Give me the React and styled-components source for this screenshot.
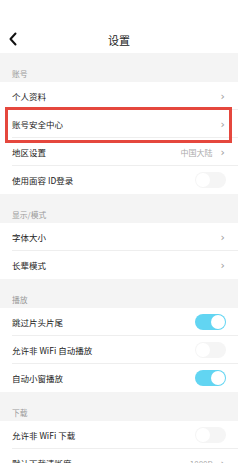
import React from "react";
import styled, { createGlobalStyle } from "styled-components";

const Global = createGlobalStyle`
  html, body {
    margin: 0;
    padding: 0;
    background: #f4f4f4;
    font-family: "Noto Sans CJK SC", "Noto Sans", sans-serif;
  }
`;

const sections = [
  {
    title: "账号",
    rows: [
      { label: "个人资料", type: "link" },
      { label: "账号安全中心", type: "link", marked: true },
      { label: "地区设置", type: "link", value: "中国大陆" },
      { label: "使用面容 ID登录", type: "toggle", on: false, last: true },
    ],
  },
  {
    title: "显示/模式",
    rows: [
      { label: "字体大小", type: "link" },
      { label: "长辈模式", type: "link", last: true },
    ],
  },
  {
    title: "播放",
    rows: [
      { label: "跳过片头片尾", type: "toggle", on: true },
      { label: "允许非 WiFi 自动播放", type: "toggle", on: false },
      { label: "自动小窗播放", type: "toggle", on: true, last: true },
    ],
  },
  {
    title: "下载",
    rows: [
      { label: "允许非 WiFi 下载", type: "toggle", on: false },
      { label: "默认下载清晰度", type: "link", value: "1080P" },
    ],
  },
];

const App = () => {
  return (
    <>
      <Global />
      <Page>
        <Header>
          <Back>
            <svg width="10" height="14" viewBox="0 0 10 14">
              <path
                d="M7.5 1.5 L2.5 7 L7.5 12.5"
                fill="none"
                stroke="#111"
                strokeWidth="2"
                strokeLinecap="round"
                strokeLinejoin="round"
              />
            </svg>
          </Back>
          <Title>设置</Title>
        </Header>
        {sections.map((section) => (
          <Section key={section.title}>
            <SectionTitle>{section.title}</SectionTitle>
            {section.rows.map((row) => (
              <Row key={row.label} last={row.last}>
                <Label>{row.label}</Label>
                <Right>
                  {row.value && <Value>{row.value}</Value>}
                  {row.type === "link" && <Chevron>›</Chevron>}
                  {row.type === "toggle" && (
                    <Toggle on={row.on}>
                      <Knob on={row.on} />
                    </Toggle>
                  )}
                </Right>
                {row.marked && <Highlight />}
              </Row>
            ))}
          </Section>
        ))}
      </Page>
    </>
  );
};

export default App;

// css
const Page = styled.div`
  width: 238px;
  min-height: 463px;
  background: #f4f4f4;
  overflow: hidden;
`;

const Header = styled.div`
  height: 53px;
  background: #fff;
  display: flex;
  align-items: center;
  justify-content: center;
  position: relative;
  padding-top: 26px;
  box-sizing: border-box;
`;

const Back = styled.div`
  position: absolute;
  left: 8px;
  top: 32px;
  width: 10px;
  height: 14px;
  display: flex;
`;

const Title = styled.div`
  font-size: 11px;
  color: #222;
  line-height: 22px;
`;

const Section = styled.div`
  display: flex;
  flex-direction: column;
`;

const SectionTitle = styled.div`
  height: 29px;
  box-sizing: border-box;
  padding: 0 12px 3px;
  display: flex;
  align-items: flex-end;
  font-size: 7.8px;
  color: #9a9a9a;
`;

const Row = styled.div`
  position: relative;
  height: 28px;
  background: #fff;
  display: flex;
  align-items: center;
  justify-content: space-between;
  padding: 0 12px;
  box-sizing: border-box;
  &::after {
    content: "";
    display: ${(p) => (p.last ? "none" : "block")};
    position: absolute;
    left: 12px;
    right: 0;
    bottom: 0;
    height: 1px;
    background: #eeeeee;
  }
`;

const Label = styled.div`
  font-size: 8.5px;
  color: #222;
`;

const Right = styled.div`
  display: flex;
  align-items: center;
  gap: 8px;
`;

const Value = styled.span`
  font-size: 8px;
  color: #aaa;
`;

const Chevron = styled.span`
  font-size: 11px;
  color: #999;
  line-height: 1;
  margin-right: 1px;
  font-family: "DejaVu Sans", sans-serif;
`;

const Toggle = styled.div`
  width: 31px;
  height: 16px;
  border-radius: 8px;
  background: ${(p) => (p.on ? "#62d5f2" : "#f5f5f5")};
  position: relative;
`;

const Knob = styled.div`
  position: absolute;
  top: 1px;
  left: ${(p) => (p.on ? "16px" : "1px")};
  width: 14px;
  height: 14px;
  border-radius: 50%;
  background: #fff;
`;

const Highlight = styled.div`
  position: absolute;
  z-index: 2;
  top: -3px;
  bottom: -5px;
  left: 5px;
  right: 6px;
  border: 3px solid #e5473d;
  pointer-events: none;
`;
